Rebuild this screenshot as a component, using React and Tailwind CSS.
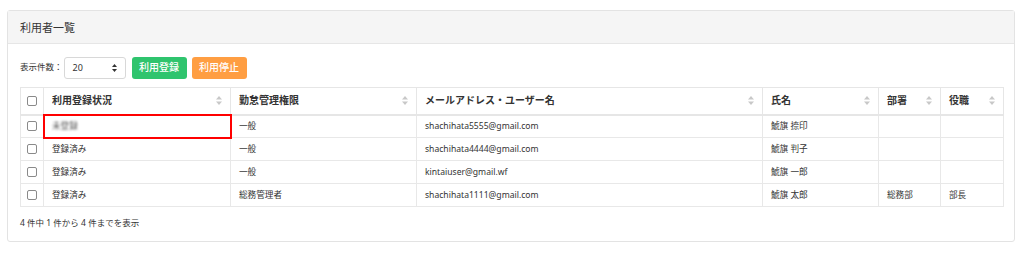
const columns = [
  { label: "利用登録状況", w: "w-[187px]" },
  { label: "勤怠管理権限", w: "w-[186px]" },
  { label: "メールアドレス・ユーザー名", w: "w-[346px]" },
  { label: "氏名", w: "w-[116px]" },
  { label: "部署", w: "w-[62px]" },
  { label: "役職", w: "w-[63px]" },
];

const rows = [
  { status: "未登録", blur: true, role: "一般", email: "shachihata5555@gmail.com", name: "鯱旗 捺印", dept: "", title: "" },
  { status: "登録済み", role: "一般", email: "shachihata4444@gmail.com", name: "鯱旗 判子", dept: "", title: "" },
  { status: "登録済み", role: "一般", email: "kintaiuser@gmail.wf", name: "鯱旗 一郎", dept: "", title: "" },
  { status: "登録済み", role: "総務管理者", email: "shachihata1111@gmail.com", name: "鯱旗 太郎", dept: "総務部", title: "部長" },
];

const SortIcon = () => (
  <svg width="6" height="9" viewBox="0 0 6 9" className="shrink-0">
    <path d="M3 0 L6 3.5 H0 Z" fill="#c8c8c8" />
    <path d="M3 9 L6 5.5 H0 Z" fill="#c8c8c8" />
  </svg>
);

const Box = () => (
  <span className="block w-[10px] h-[10px] border border-[#8a8a8a] rounded-[2px] bg-white" />
);

export default function App() {
  return (
    <div className="w-[1024px] h-[253px] bg-white pl-[7px] pt-[10px] pr-[9px] text-[#333]" style={{ fontFamily: '"Noto Sans", "Noto Sans CJK JP", sans-serif' }}>
      <div className="border border-[#e3e3e3] rounded-[3px] h-[232px] flex flex-col">
        <div className="h-[33px] bg-[#f5f5f5] border-b border-[#e6e6e6] flex items-center px-[12px] text-[11px] leading-none">
          利用者一覧
        </div>
        <div className="px-[12px] pt-[12px]">
          <div className="flex items-center h-[23px]">
            <span className="text-[8.5px] mr-[1px]">表示件数：</span>
            <div className="w-[62px] h-[22px] border border-[#d8d8d8] rounded-[3px] flex items-center justify-between pl-[8px] pr-[8px] text-[9px]">
              <span>20</span>
              <svg width="5" height="8" viewBox="0 0 5 8">
                <path d="M2.5 0 L5 3 H0 Z" fill="#333" />
                <path d="M2.5 8 L5 5 H0 Z" fill="#333" />
              </svg>
            </div>
            <button className="ml-[6px] h-[22px] w-[55px] rounded-[3px] bg-[#2fc46e] text-white text-[10px] font-medium">利用登録</button>
            <button className="ml-[5px] h-[22px] w-[55px] rounded-[3px] bg-[#ff9e42] text-white text-[10px] font-medium">利用停止</button>
          </div>
          <table className="mt-[8px] w-[983px] border-collapse table-fixed text-[8.6px]">
            <thead>
              <tr className="h-[27px] border-b-2 border-[#e6e6e6]">
                <th className="w-[23px] border border-[#e6e6e6] border-b-2">
                  <div className="flex justify-center"><Box /></div>
                </th>
                {columns.map((c) => (
                  <th key={c.label} className={`${c.w} border border-[#e6e6e6] border-b-2 px-[8px] text-left font-bold text-[10px]`}>
                    <div className="flex items-center justify-between">
                      <span>{c.label}</span>
                      <SortIcon />
                    </div>
                  </th>
                ))}
              </tr>
            </thead>
            <tbody>
              {rows.map((r, i) => (
                <tr key={i} className="h-[23px]">
                  <td className="border border-[#e8e8e8]">
                    <div className="flex justify-center"><Box /></div>
                  </td>
                  <td className={`px-[8px] ${r.blur ? "outline-2 outline-[#ff0000] -outline-offset-1 border border-[#e8e8e8]" : "border border-[#e8e8e8]"}`}>
                    <span className={r.blur ? "blur-[1px] text-[#555] text-[8.6px]" : ""}>{r.status}</span>
                  </td>
                  <td className="border border-[#e8e8e8] px-[8px]">{r.role}</td>
                  <td className="border border-[#e8e8e8] px-[8px]">{r.email}</td>
                  <td className="border border-[#e8e8e8] px-[8px]">{r.name}</td>
                  <td className="border border-[#e8e8e8] px-[8px]">{r.dept}</td>
                  <td className="border border-[#e8e8e8] px-[8px]">{r.title}</td>
                </tr>
              ))}
            </tbody>
          </table>
          <div className="mt-[10px] text-[8.5px]">4 件中 1 件から 4 件までを表示</div>
        </div>
      </div>
    </div>
  );
}
